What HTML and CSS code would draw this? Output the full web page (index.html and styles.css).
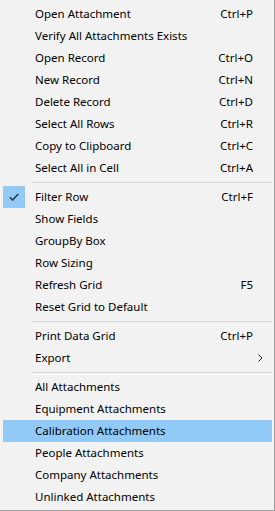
FILE: index.html
```html
<!DOCTYPE html>
<html lang="en">

<head>
    <meta charset="UTF-8">
    <meta name="viewport" content="width=device-width, initial-scale=1.0">
    <title>Grid Context Menu</title>
    <link rel="stylesheet" href="styles.css">
</head>

<body>
    <!-- Context menu -->
    <div class="menu">
        <ul>
            <li class="item"><span class="check"></span><span class="label">Open Attachment</span><span class="key">Ctrl+P</span></li>
            <li class="item"><span class="check"></span><span class="label">Verify All Attachments Exists</span><span class="key"></span></li>
            <li class="item"><span class="check"></span><span class="label">Open Record</span><span class="key">Ctrl+O</span></li>
            <li class="item"><span class="check"></span><span class="label">New Record</span><span class="key">Ctrl+N</span></li>
            <li class="item"><span class="check"></span><span class="label">Delete Record</span><span class="key">Ctrl+D</span></li>
            <li class="item"><span class="check"></span><span class="label">Select All Rows</span><span class="key">Ctrl+R</span></li>
            <li class="item"><span class="check"></span><span class="label">Copy to Clipboard</span><span class="key">Ctrl+C</span></li>
            <li class="item"><span class="check"></span><span class="label">Select All in Cell</span><span class="key">Ctrl+A</span></li>
            <li class="separator"></li>
            <li class="item"><span class="check checked">
                <svg width="10" height="8" viewBox="0 0 10 8"><path d="M0.8 4.2 L3.6 7 L9.2 1" fill="none" stroke="#333" stroke-width="1.5"/></svg>
            </span><span class="label">Filter Row</span><span class="key">Ctrl+F</span></li>
            <li class="item"><span class="check"></span><span class="label">Show Fields</span><span class="key"></span></li>
            <li class="item"><span class="check"></span><span class="label">GroupBy Box</span><span class="key"></span></li>
            <li class="item"><span class="check"></span><span class="label">Row Sizing</span><span class="key"></span></li>
            <li class="item"><span class="check"></span><span class="label">Refresh Grid</span><span class="key">F5</span></li>
            <li class="item"><span class="check"></span><span class="label">Reset Grid to Default</span><span class="key"></span></li>
            <li class="separator"></li>
            <li class="item"><span class="check"></span><span class="label">Print Data Grid</span><span class="key">Ctrl+P</span></li>
            <li class="item submenu"><span class="check"></span><span class="label">Export</span><span class="key"></span>
                <svg class="arrow" width="5" height="8" viewBox="0 0 5 8"><path d="M0.5 0.5 L4 4 L0.5 7.5" fill="none" stroke="#222" stroke-width="1"/></svg>
            </li>
            <li class="separator"></li>
            <li class="item"><span class="check"></span><span class="label">All Attachments</span><span class="key"></span></li>
            <li class="item"><span class="check"></span><span class="label">Equipment Attachments</span><span class="key"></span></li>
            <li class="item active"><span class="check"></span><span class="label">Calibration Attachments</span><span class="key"></span></li>
            <li class="item"><span class="check"></span><span class="label">People Attachments</span><span class="key"></span></li>
            <li class="item"><span class="check"></span><span class="label">Company Attachments</span><span class="key"></span></li>
            <li class="item"><span class="check"></span><span class="label">Unlinked Attachments</span><span class="key"></span></li>
        </ul>
    </div>
</body>

</html>
```

FILE: styles.css
```css
/* Reset */
* {
    margin: 0;
    padding: 0;
    box-sizing: border-box;
}

body {
    font-family: 'Noto Sans', 'Liberation Sans', sans-serif;
    font-size: 11.5px;
    color: #000;
    background-color: #fff;
}

/* Menu */
.menu {
    width: 275px;
    height: 511px;
    background-color: #f2f2f2;
    border-right: 1px solid #a0a0a0;
    border-bottom: 1px solid #a0a0a0;
    padding: 3px 2px 2px 3px;
}

.menu ul {
    list-style: none;
}

.item {
    display: flex;
    align-items: center;
    height: 22px;
    padding-right: 19px;
    position: relative;
}

.item.active {
    background-color: #91c9f7;
}

.check {
    width: 22px;
    height: 22px;
    margin-right: 10px;
    display: flex;
    align-items: center;
    justify-content: center;
}

.check.checked {
    background-color: #91c9f7;
}

.label,
.key {
    white-space: nowrap;
    padding-bottom: 2px;
}

.label {
    flex: 1;
}

.arrow {
    position: absolute;
    right: 9px;
    top: 7px;
}

/* Separador */
.separator {
    height: 7px;
    margin-left: 28px;
    padding-top: 3px;
}

.separator::before {
    content: "";
    display: block;
    height: 1px;
    background-color: #d7d7d7;
}
```
